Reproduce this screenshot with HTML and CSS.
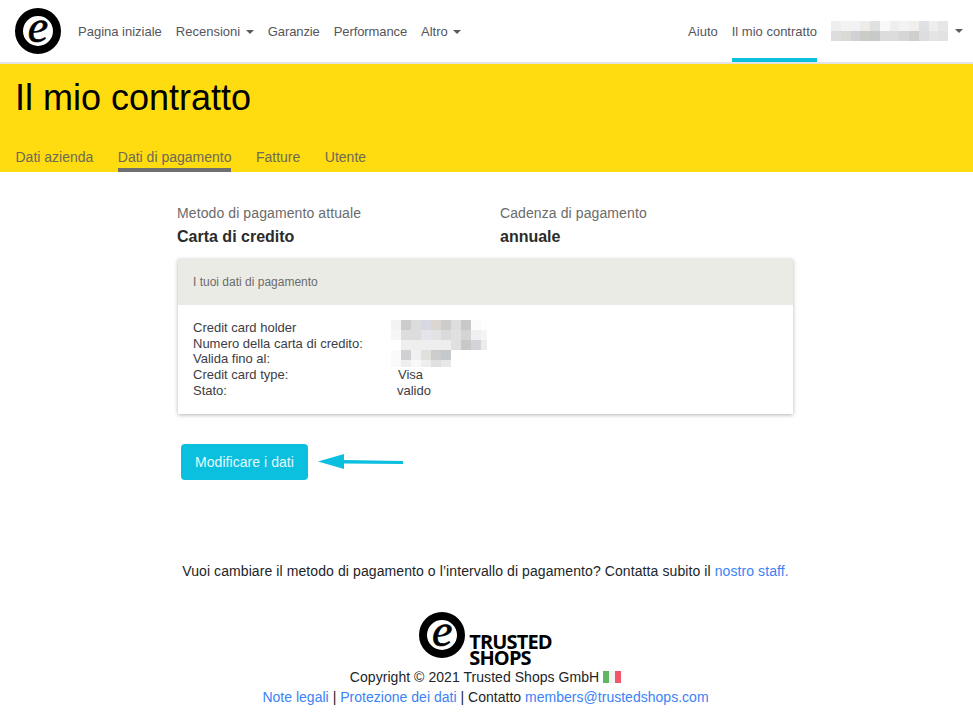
FILE: index.html
```html
<!DOCTYPE html>
<html lang="it">
<head>
    <meta charset="UTF-8">
    <meta name="viewport" content="width=device-width, initial-scale=1.0">
    <title>Il mio contratto</title>
    <link rel="stylesheet" href="styles.css">
</head>
<body>
    <!-- Top navigation -->
    <nav class="navbar">
        <a class="brand" href="#"><span class="seal"><span class="seal-e">e</span></span></a>
        <ul class="nav-links">
            <li><a href="#">Pagina iniziale</a></li>
            <li><a href="#">Recensioni <i class="caret"></i></a></li>
            <li class="tight"><a href="#">Garanzie</a></li>
            <li class="tight"><a href="#">Performance</a></li>
            <li><a href="#">Altro <i class="caret"></i></a></li>
        </ul>
        <ul class="nav-links nav-right">
            <li><a href="#">Aiuto</a></li>
            <li class="active"><a href="#">Il mio contratto</a></li>
            <li class="account">
                <svg class="blur-name" width="117" height="20" viewBox="0 0 12 2" preserveAspectRatio="none" shape-rendering="crispEdges">
                    <rect x="0" y="0" width="1" height="1" fill="#eeeeee"/><rect x="1" y="0" width="1" height="1" fill="#f3f3f3"/><rect x="2" y="0" width="1" height="1" fill="#f0f2f4"/><rect x="3" y="0" width="1" height="1" fill="#eeece9"/><rect x="4" y="0" width="1" height="1" fill="#dfe1e1"/><rect x="5" y="0" width="1" height="1" fill="#f8f8f8"/><rect x="6" y="0" width="1" height="1" fill="#eeeeee"/><rect x="7" y="0" width="1" height="1" fill="#f2f3f5"/><rect x="8" y="0" width="1" height="1" fill="#f0efec"/><rect x="9" y="0" width="1" height="1" fill="#dfe0e4"/><rect x="10" y="0" width="1" height="1" fill="#eeeeee"/><rect x="11" y="0" width="1" height="1" fill="#e6e6e6"/>
                    <rect x="0" y="1" width="1" height="1" fill="#dddddd"/><rect x="1" y="1" width="1" height="1" fill="#d9d9d5"/><rect x="2" y="1" width="1" height="1" fill="#d0d1d6"/><rect x="3" y="1" width="1" height="1" fill="#cbcbc8"/><rect x="4" y="1" width="1" height="1" fill="#c8cac9"/><rect x="5" y="1" width="1" height="1" fill="#dcdcdc"/><rect x="6" y="1" width="1" height="1" fill="#dcdcdc"/><rect x="7" y="1" width="1" height="1" fill="#d6d6d6"/><rect x="8" y="1" width="1" height="1" fill="#cfcfcb"/><rect x="9" y="1" width="1" height="1" fill="#dcdde1"/><rect x="10" y="1" width="1" height="1" fill="#e4e4e4"/><rect x="11" y="1" width="1" height="1" fill="#e2e2e2"/>
                </svg>
                <i class="caret"></i>
            </li>
        </ul>
    </nav>

    <!-- Yellow page header with tabs -->
    <header class="page-head">
        <h1>Il mio contratto</h1>
        <div class="tabs">
            <a href="#">Dati azienda</a>
            <a href="#" class="current">Dati di pagamento</a>
            <a href="#">Fatture</a>
            <a href="#">Utente</a>
        </div>
    </header>

    <main class="content">
        <div class="summary">
            <div class="summary-col">
                <p class="summary-label">Metodo di pagamento attuale</p>
                <p class="summary-value">Carta di credito</p>
            </div>
            <div class="summary-col">
                <p class="summary-label">Cadenza di pagamento</p>
                <p class="summary-value">annuale</p>
            </div>
        </div>

        <section class="card">
            <div class="card-head">I tuoi dati di pagamento</div>
            <div class="card-body">
                <div class="labels">
                    <div>Credit card holder</div>
                    <div>Numero della carta di credito:</div>
                    <div>Valida fino al:</div>
                    <div>Credit card type:</div>
                    <div>Stato:</div>
                </div>
                <div class="values">
                    <svg class="blur-values" width="96" height="47" viewBox="0 0 96 47" shape-rendering="crispEdges">
                        <rect x="0" y="0" width="10" height="10" fill="#f3f3f3"/><rect x="10" y="0" width="10" height="10" fill="#cccccc"/><rect x="20" y="0" width="10" height="10" fill="#dcdcdc"/><rect x="30" y="0" width="10" height="10" fill="#d8d8e2"/><rect x="40" y="0" width="10" height="10" fill="#dcd6d2"/><rect x="50" y="0" width="10" height="10" fill="#cccccc"/><rect x="60" y="0" width="10" height="10" fill="#dddddd"/><rect x="70" y="0" width="10" height="10" fill="#c8c8c8"/><rect x="80" y="0" width="10" height="10" fill="#fbfbfb"/>
                        <rect x="0" y="10" width="10" height="10" fill="#f6f6f6"/><rect x="10" y="10" width="10" height="10" fill="#dddddd"/><rect x="20" y="10" width="10" height="10" fill="#dcdcdc"/><rect x="30" y="10" width="10" height="10" fill="#e4e4ea"/><rect x="40" y="10" width="10" height="10" fill="#e3e3e6"/><rect x="50" y="10" width="10" height="10" fill="#dadada"/><rect x="60" y="10" width="10" height="10" fill="#e0e0e0"/><rect x="70" y="10" width="10" height="10" fill="#d4d4d4"/><rect x="80" y="10" width="10" height="10" fill="#eff0f2"/><rect x="90" y="10" width="6" height="10" fill="#f4f4f4"/>
                        <rect x="10" y="20" width="50" height="10" fill="#eeeeee"/><rect x="60" y="20" width="10" height="10" fill="#e0e0e0"/><rect x="70" y="20" width="10" height="10" fill="#c8c8c8"/><rect x="80" y="20" width="10" height="10" fill="#d4d4d8"/><rect x="90" y="20" width="6" height="10" fill="#ebeced"/>
                        <rect x="0" y="30" width="10" height="10" fill="#fafafa"/><rect x="10" y="30" width="10" height="10" fill="#cfcfd4"/><rect x="20" y="30" width="10" height="10" fill="#f0f0f0"/><rect x="30" y="30" width="10" height="10" fill="#e0e0dc"/><rect x="40" y="30" width="10" height="10" fill="#cccccc"/><rect x="50" y="30" width="10" height="10" fill="#c5c9cc"/>
                        <rect x="0" y="40" width="10" height="7" fill="#fafafa"/><rect x="10" y="40" width="10" height="7" fill="#eeeeee"/><rect x="20" y="40" width="10" height="7" fill="#f8f8f8"/><rect x="30" y="40" width="10" height="7" fill="#eeeeee"/><rect x="40" y="40" width="10" height="7" fill="#e0e0e0"/><rect x="50" y="40" width="10" height="7" fill="#e8e8e8"/>
                    </svg>
                    <div class="value-visa">Visa</div>
                    <div>valido</div>
                </div>
            </div>
        </section>

        <div class="actions">
            <a class="btn" href="#">Modificare i dati</a>
            <svg class="arrow" width="86" height="18" viewBox="0 0 86 18">
                <path d="M0 8.5 L26 1 L26 7 L85 8 L85 11 L26 10.5 L26 16 Z" fill="#0bbfdf"/>
            </svg>
        </div>
    </main>

    <footer class="footer">
        <p class="contact-line">Vuoi cambiare il metodo di pagamento o l’intervallo di pagamento? Contatta subito il <a href="#">nostro staff.</a></p>
        <div class="footer-logo">
            <span class="seal"><span class="seal-e">e</span></span>
            <span class="wordmark">TRUSTED<br>SHOPS</span>
        </div>
        <p class="copyright">Copyright © 2021 Trusted Shops GmbH <span class="flag"><i class="green"></i><i class="white"></i><i class="red"></i></span></p>
        <p class="legal"><a href="#">Note legali</a> | <a href="#">Protezione dei dati</a> | Contatto <a href="#">members@trustedshops.com</a></p>
    </footer>
</body>
</html>
```

FILE: styles.css
```css
/* Base styles */
* {
    box-sizing: border-box;
}

body {
    margin: 0;
    font-family: "Liberation Sans", Arial, sans-serif;
    font-size: 14px;
    color: #212529;
    background: #fff;
}

a {
    text-decoration: none;
    color: #3b82f6;
}

p {
    margin: 0;
}

/* Logo seal */
.seal {
    display: flex;
    align-items: center;
    justify-content: center;
    flex: none;
    width: 46px;
    height: 46px;
    border-radius: 50%;
    background: #fff;
    border: 8px solid #000;
}

.seal-e {
    font-family: "Liberation Serif", serif;
    font-style: italic;
    font-size: 46px;
    line-height: 1;
    color: #000;
    -webkit-text-stroke: 0.7px #000;
    margin-top: -8px;
}

/* Navigation */
.navbar {
    display: flex;
    align-items: stretch;
    height: 64px;
    padding-left: 15px;
    border-bottom: 2px solid #e3e3e3;
    background: #fff;
}

.brand {
    display: flex;
    align-items: center;
    margin-right: 10px;
    padding-bottom: 1px;
}

.nav-links {
    display: flex;
    align-items: stretch;
    gap: 14px;
    margin: 0;
    padding: 0 0 0 7px;
    list-style: none;
    font-size: 13px;
}

.nav-links li {
    display: flex;
    align-items: center;
}

.nav-links .tight {
    letter-spacing: -0.1px;
}

.nav-links a {
    color: #55555c;
}

.nav-right {
    margin-left: auto;
    padding: 0 10px 0 0;
}

.nav-right .active {
    border-bottom: 4px solid #0bbfdf;
    padding-top: 4px;
}

.caret {
    display: inline-block;
    width: 0;
    height: 0;
    margin-left: 2px;
    vertical-align: 2px;
    border-top: 4px solid #5a5a5f;
    border-left: 4px solid transparent;
    border-right: 4px solid transparent;
}

.account .caret {
    margin-left: 7px;
}

/* Yellow header */
.page-head {
    height: 108px;
    padding: 0 16px;
    background: #ffdc0f;
    display: flex;
    flex-direction: column;
    justify-content: space-between;
}

.page-head h1 {
    margin: 14px 0 0 -1px;
    font-size: 36px;
    font-weight: 400;
    line-height: 40px;
    color: #000;
}

.tabs {
    display: flex;
    gap: 24.5px;
    margin-left: -0.5px;
    font-size: 14px;
}

.tabs a {
    padding-bottom: 3px;
    color: #6d6a58;
    border-bottom: 4px solid transparent;
}

.tabs .current {
    border-bottom-color: #6f6f6f;
}

/* Main content */
.content {
    width: 615px;
    margin: 0 auto;
    padding-top: 33px;
    transform: translateX(-1px);
}

.summary {
    display: flex;
    margin-left: -1px;
}

.summary-col {
    flex: none;
    width: 323px;
}

.summary-label {
    line-height: 16px;
    letter-spacing: 0.1px;
    color: #6b6b6b;
}

.summary-value {
    margin-top: 7px;
    font-size: 16px;
    font-weight: 700;
    line-height: 18px;
    color: #2b2b2b;
}

.card {
    margin-top: 13px;
    box-shadow: 0 1px 4px rgba(0, 0, 0, 0.3);
}

.card-head {
    height: 46px;
    line-height: 46px;
    padding-left: 15px;
    font-size: 12px;
    color: #6b6b6b;
    background: #ebebe6;
}

.card-body {
    display: flex;
    height: 109px;
    padding: 15px 15px 0;
    font-size: 13px;
    line-height: 15.7px;
    color: #3d3d45;
}

.labels {
    width: 198px;
}

.value-visa {
    padding-left: 7px;
}

.values div {
    margin-left: 6px;
}

.values .value-visa {
    margin-left: 0;
}

.blur-values {
    display: block;
}

/* Action row */
.actions {
    display: flex;
    align-items: center;
    gap: 10px;
    margin-top: 30px;
    padding-left: 3px;
}

.btn {
    display: block;
    width: 127px;
    height: 36px;
    line-height: 36px;
    text-align: center;
    font-size: 14px;
    letter-spacing: 0.05px;
    border-radius: 4px;
    color: #e4f9ff;
    background: #0bbfdf;
}

.arrow {
    display: block;
}

/* Footer */
.footer {
    text-align: center;
    margin-top: 82px;
    transform: translateX(-1px);
}

.contact-line {
    line-height: 18px;
    letter-spacing: 0.09px;
    color: #212529;
}

.contact-line a,
.legal a {
    color: #3b82f6;
}

.footer-logo {
    display: flex;
    justify-content: center;
    margin-top: 32px;
    height: 56px;
}

.wordmark {
    margin: 22px 0 0 4px;
    font-family: "Open Sans", sans-serif;
    font-weight: 700;
    font-size: 20px;
    line-height: 16px;
    letter-spacing: -0.85px;
    text-align: left;
    color: #000;
}

.copyright {
    line-height: 18px;
    letter-spacing: 0.05px;
}

.flag {
    display: inline-flex;
    vertical-align: -1px;
}

.flag i {
    display: block;
    width: 6px;
    height: 12px;
}

.flag .green { background: #5fb85f; }
.flag .white { background: #f4f4f4; }
.flag .red { background: #f2556a; }

.legal {
    margin-top: 2px;
    line-height: 18px;
    letter-spacing: 0.02px;
}
```
